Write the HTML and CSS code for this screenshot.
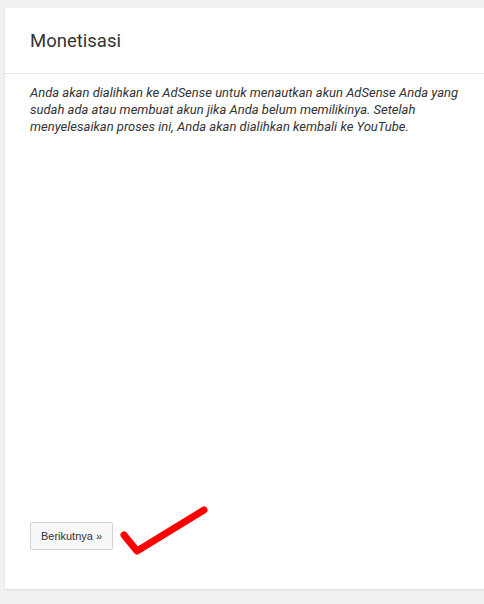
FILE: index.html
```html
<!DOCTYPE html>
<html lang="id">
<head>
  <meta charset="UTF-8" />
  <meta name="viewport" content="width=device-width, initial-scale=1.0" />
  <title>Monetisasi</title>
  <link rel="stylesheet" href="styles.css">
</head>
<body>
  <div class="card">
    <div class="card-header">
      <h1>Monetisasi</h1>
    </div>
    <div class="card-body">
      <p class="note">Anda akan dialihkan ke AdSense untuk menautkan akun AdSense Anda yang sudah ada atau membuat akun jika Anda belum memilikinya. Setelah menyelesaikan proses ini, Anda akan dialihkan kembali ke YouTube.</p>
      <div class="actions">
        <button type="button" class="btn">Berikutnya &raquo;</button>
        <svg class="check" width="100" height="60" viewBox="0 0 100 60">
          <polyline points="6,30 19,46 86,5" fill="none" stroke="#ff0000" stroke-width="7" stroke-linecap="round" stroke-linejoin="round" />
        </svg>
      </div>
    </div>
  </div>
</body>
</html>
```

FILE: styles.css
```css
body {
  margin: 0;
  padding: 8px 0 0 5px;
  background: #f1f1f1;
  font-family: Roboto, "Liberation Sans", Arial, sans-serif;
  overflow: hidden;
  height: 604px;
  box-sizing: border-box;
}

.card {
  width: 500px;
  height: 581px;
  background: #fff;
  box-shadow: 0 1px 2px rgba(0, 0, 0, 0.1);
  display: flex;
  flex-direction: column;
}

.card-header {
  height: 66px;
  box-sizing: border-box;
  border-bottom: 1px solid #e5e5e5;
  padding: 0 25px;
  display: flex;
  align-items: center;
}

.card-header h1 {
  margin: 0;
  font-size: 18.5px;
  font-weight: 400;
  color: #333;
}

.card-body {
  flex: 1;
  padding: 10px 25px 0;
  display: flex;
  flex-direction: column;
}

.note {
  margin: 0;
  width: 445px;
  font-size: 13px;
  line-height: 17px;
  font-style: italic;
  color: #333;
}

.actions {
  margin-top: auto;
  margin-bottom: 39px;
  position: relative;
}

.btn {
  width: 83px;
  height: 28px;
  padding: 0;
  background: #f8f8f8;
  border: 1px solid #d3d3d3;
  border-radius: 2px;
  font-family: "Liberation Sans", Arial, sans-serif;
  font-size: 11px;
  color: #333;
  cursor: pointer;
}

.check {
  position: absolute;
  left: 88px;
  top: -17px;
}
```
